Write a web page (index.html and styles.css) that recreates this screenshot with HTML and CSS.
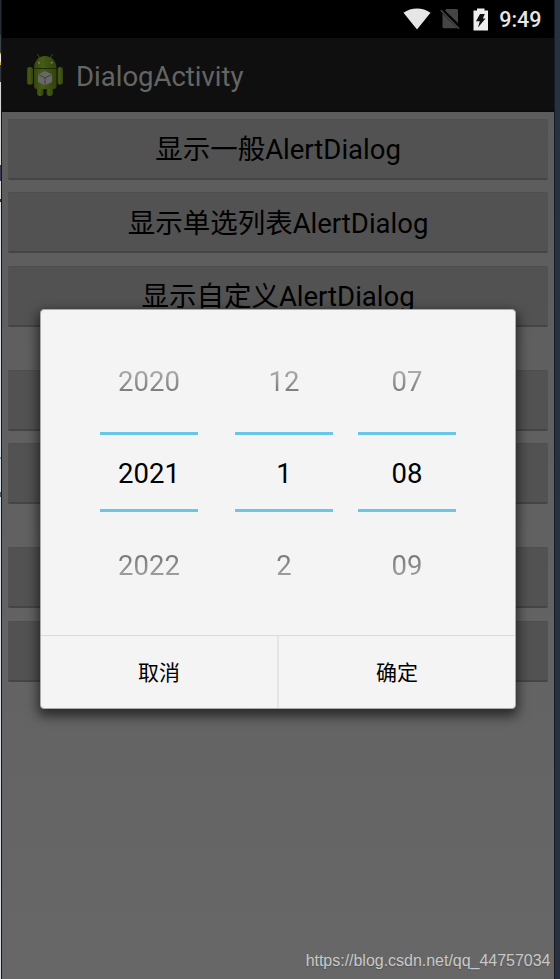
FILE: index.html
```html
<!DOCTYPE html>
<html lang="zh-CN">
<head>
<meta charset="utf-8">
<title>DialogActivity</title>
<link rel="stylesheet" href="styles.css">
</head>
<body>
<div class="desktop">
  <div class="edge-left"></div>
  <main class="phone">
    <div class="status">
      <svg class="wifi" width="28" height="22" viewBox="0 0 28 22"><path d="M0.5 4.800C8-1 20-1 27.500 4.800L14 21.500Z" fill="#e6e6e6"/></svg>
      <svg class="sim" width="20" height="22" viewBox="0 0 20 22"><path d="M6.500 1H16.500Q18 1 18 2.500V15L5 2.500ZM2.500 5.500L17.500 20.300H4Q2.500 20.300 2.500 18.800Z" fill="#454545"/><path d="M.8 2.200L19.200 20.800" stroke="#454545" stroke-width="1.6"/></svg>
      <svg class="battery" width="16" height="23" viewBox="0 0 16 23"><path d="M.5 2.500H4V.5H11.500V2.500H15V22.500H.5Z" fill="#eee"/><path d="M7 6H11.800L9.800 10.500H12.500L5 19.500L6.800 13.300H3Z" fill="#111"/></svg>
      <span class="clock">9:49</span>
    </div>
    <header class="actionbar">
      <svg class="robot" width="38" height="44" viewBox="0 0 38 44">
        <defs>
          <linearGradient id="body" x1="0" x2="1"><stop offset="0" stop-color="#34450e"/><stop offset=".35" stop-color="#465c14"/><stop offset="1" stop-color="#33420e"/></linearGradient>
        </defs>
        <path d="M11.500 1L14 6M26.500 1L24 6" stroke="#34420f" stroke-width="1.1"/>
        <path d="M8 15.200C8 8 12.500 3 19 3S30.500 8 30.500 15.200Z" fill="url(#body)"/>
        <rect x="1" y="14" width="6" height="17.500" rx="2.600" fill="url(#body)"/>
        <rect x="31.500" y="14" width="5.500" height="17.500" rx="2.600" fill="url(#body)"/>
        <rect x="11" y="31" width="6.500" height="12" rx="3" fill="url(#body)"/>
        <rect x="20.500" y="31" width="6.500" height="12" rx="3" fill="url(#body)"/>
        <path d="M8 16H30.500V33Q30.500 36 27.500 36H11Q8 36 8 33Z" fill="url(#body)"/>
        <path d="M8 15.500H30.500" stroke="#202a08"/>
        <circle cx="13" cy="9.700" r="1" fill="#777c70"/><circle cx="25.700" cy="9.700" r="1" fill="#777c70"/>
        <path d="M19 18L26 21.300V29L19 32.500L12 29V21.300Z" fill="#686868"/>
        <path d="M12.500 21.800L19 24.800L25.500 21.800M19 24.800V32.500" fill="none" stroke="#3c4337"/>
      </svg>
      <h1 class="title">DialogActivity</h1>
    </header>
    <section class="content">
      <div class="btn">显示一般AlertDialog</div>
      <div class="btn">显示单选列表AlertDialog</div>
      <div class="btn">显示自定义AlertDialog</div>
      <div class="btn group-start"></div>
      <div class="btn"></div>
      <div class="btn group-start"></div>
      <div class="btn"></div>
    </section>
  </main>
  <div class="edge-right"></div>
</div>
<div class="dialog" role="dialog">
  <div class="pickers">
    <div class="picker"><span class="prev">2020</span><span class="current">2021</span><span class="next">2022</span></div>
    <div class="picker"><span class="prev">12</span><span class="current">1</span><span class="next">2</span></div>
    <div class="picker"><span class="prev">07</span><span class="current">08</span><span class="next">09</span></div>
  </div>
  <div class="actions"><div class="action">取消</div><div class="action">确定</div></div>
</div>
<div class="watermark">https://blog.csdn.net/qq_44757034</div>
</body>
</html>
```
FILE: styles.css
```css
* { box-sizing: border-box; }
body {
  margin: 0;
  font-family: Roboto, "Noto Sans CJK SC", sans-serif;
  color: #000;
  overflow: hidden;
}
.desktop { display: flex; width: 560px; height: 979px; }
.edge-left {
  width: 2px;
  border-right: 1px solid #14181c;
  background: linear-gradient(#252c32 0 35px, #3c4347 35px 53px, #e3b85c 53px 55px, #dfe9ee 55px 62px, #d9a93c 62px 65px, #30363a 65px 82px, #d6d6d6 82px 165px, #383d52 165px 181px, #d4d6d8 181px 199px, #333 199px 202px, #d6dbe0 202px 457px, #89a 457px 459px, #d6dbe0 459px 492px, #586577 492px 497px, #d6dbe0 497px);
}
.edge-right { width: 6px; border-left: 1px solid #171b22; background: #29303f; }
.phone {
  width: 552px;
  display: flex;
  flex-direction: column;
  background: #5d5d5d;
}
.status {
  height: 38px;
  display: flex;
  align-items: center;
  justify-content: flex-end;
  padding-right: 12.5px;
  background: #000;
}
.status svg { flex: none; }
.wifi { margin: 0 9px 0 0; }
.sim { margin-right: 13.5px; }
.battery { margin-right: 10px; }
.clock { color: #e6e6e6; font-size: 21.5px; font-weight: 500; line-height: 38px; margin-top: 2px; }
.actionbar {
  height: 74px;
  display: flex;
  align-items: center;
  gap: 12px;
  padding-left: 24px;
  background: #0f0f0f;
  border-bottom: 2px solid #0b0b0b;
}
.title { margin: 4px 0 0; font-size: 27.5px; font-weight: 400; color: #656565; }
.robot { margin-top: 2px; }
.content {
  flex: 1;
  display: flex;
  flex-direction: column;
  gap: 12.5px;
  padding: 6.9px 6px;
  background: linear-gradient(#5c5c5c, #676767);
}
.btn {
  height: 61px;
  flex: none;
  display: flex;
  align-items: center;
  justify-content: center;
  padding-bottom: 3px;
  border-radius: 2px;
  background: #525252;
  border-top: 1px solid #4e4e4e;
  border-bottom: 2px solid #454545;
  font-size: 27.5px;
}
.group-start { margin-top: 30.5px; }
.dialog {
  position: absolute;
  left: 40px;
  top: 309px;
  width: 476px;
  height: 400px;
  display: flex;
  flex-direction: column;
  border: 1px solid #aaa;
  border-radius: 4px;
  background: #f4f4f4;
  box-shadow: 0 5px 12px 2px rgba(0, 0, 0, .6);
}
.pickers {
  flex: 1;
  min-height: 0;
  display: grid;
  grid-template-columns: 98px 98px 98px;
  column-gap: 37px;
  padding: 26px 0 0 59px;
}
.picker { display: grid; grid-template-rows: 96px 80px 108px; height: 284px; text-align: center; font-size: 27.5px; }
.picker:last-child { margin-left: -12px; margin-right: 12px; }
.picker span { display: block; }
.current { border-top: 3px solid #68c7e8; border-bottom: 3px solid #68c7e8; line-height: 77px; }
.prev, .next { color: transparent; background-clip: text; }
.prev { line-height: 92px; background-image: linear-gradient(#b0b0b0 34%, #747474 62%); }
.next { line-height: 108px; background-image: linear-gradient(#747474 38%, #a8a8a8 64%); }
.actions {
  height: 73px;
  flex: none;
  display: grid;
  grid-template-columns: 238px 236px;
  border-top: 1px solid #dadada;
}
.action { display: flex; align-items: center; justify-content: center; font-size: 21px; padding-bottom: 2px; }
.action:first-child { border-right: 2px solid #e4e4e4; }
.watermark {
  position: absolute;
  right: 9.5px;
  bottom: 9px;
  font: 16px/19px "Liberation Sans", sans-serif;
  letter-spacing: -0.02px;
  color: #c8c8c8;
  text-shadow: 0 1px 1px #555;
}
```
